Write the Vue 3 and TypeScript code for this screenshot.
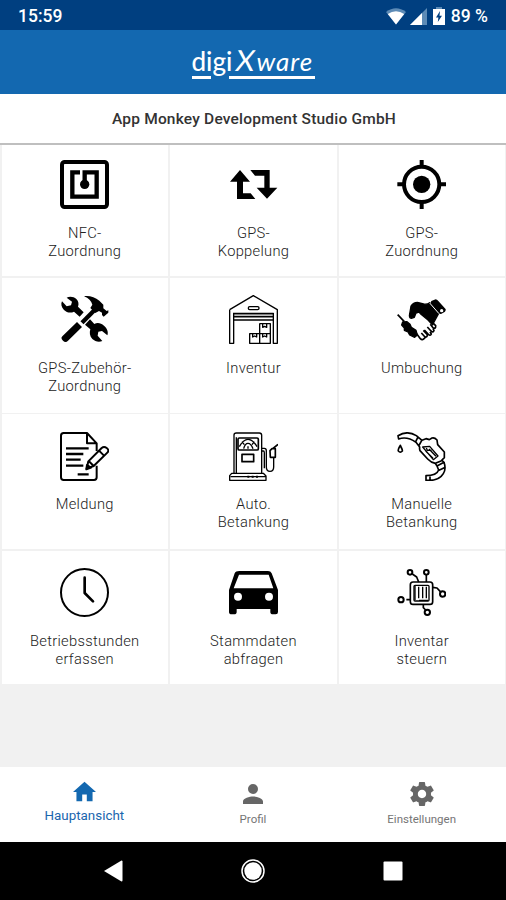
<script setup lang="ts">
interface Tile {
  icon: string
  lines: string[]
}

const tiles: Tile[] = [
  { icon: 'nfc', lines: ['NFC-', 'Zuordnung'] },
  { icon: 'link', lines: ['GPS-', 'Koppelung'] },
  { icon: 'gps', lines: ['GPS-', 'Zuordnung'] },
  { icon: 'tools', lines: ['GPS-Zubehör-', 'Zuordnung'] },
  { icon: 'warehouse', lines: ['Inventur'] },
  { icon: 'handshake', lines: ['Umbuchung'] },
  { icon: 'report', lines: ['Meldung'] },
  { icon: 'pump', lines: ['Auto.', 'Betankung'] },
  { icon: 'nozzle', lines: ['Manuelle', 'Betankung'] },
  { icon: 'clock', lines: ['Betriebsstunden', 'erfassen'] },
  { icon: 'car', lines: ['Stammdaten', 'abfragen'] },
  { icon: 'chip', lines: ['Inventar', 'steuern'] },
]
</script>

<template>
  <div class="screen">
    <div class="status">
      <span class="time">15:59</span>
      <div class="status-right">
        <svg class="wifi" viewBox="0 0 20 17">
          <path d="M0 4Q10-3.500 20 4L10 16.500Z" fill="#5d8bb6" />
          <path d="M1.800 6Q10 .5 18.200 6L10 16.500Z" fill="#fff" />
        </svg>
        <svg class="signal" viewBox="0 0 17 17">
          <path d="M17 0V17H0Z" fill="#5d8bb6" />
          <path d="M12 5V17H0Z" fill="#fff" />
        </svg>
        <svg class="battery" viewBox="0 0 12 18">
          <path d="M3 0h6v2H3z" fill="#5d8bb6" />
          <path d="M0 2h12v16H0z" fill="#fff" />
          <path d="M7 4 3 10.500h2.400L4.800 15 9 8.700H6.500z" fill="#003f80" />
        </svg>
        <span class="percent">89 %</span>
      </div>
    </div>

    <header class="header">
      <div class="logo">
        <div class="wordmark"><span class="digi">digi</span><span class="ex">X</span><span class="ware">ware</span></div>
        <div class="underline"><i class="u1"></i><i class="u2"></i></div>
      </div>
    </header>

    <div class="company">App Monkey Development Studio GmbH</div>

    <main class="grid">
      <div v-for="tile in tiles" :key="tile.icon" class="tile">
        <svg class="icon" viewBox="0 0 147 147" fill="none" stroke="#000" stroke-linejoin="round">
          <g v-if="tile.icon === 'nfc'" stroke-width="12">
            <rect x="6" y="6" width="135" height="135" rx="8" />
            <path d="M60 37H37V110H110V37H74V68" stroke-width="13" stroke-linejoin="miter" />
            <circle cx="74" cy="73" r="14" fill="#000" stroke="none" />
          </g>
          <g v-else-if="tile.icon === 'link'" fill="#000" stroke="none">
            <path d="M33 30 3 65H24V117H79L65 100H42V65H63Z" />
            <path d="M64 30H122V83H145L114 116 83 83H106V47H78Z" />
          </g>
          <g v-else-if="tile.icon === 'gps'">
            <circle cx="74" cy="73" r="53" stroke-width="12" />
            <circle cx="74" cy="73" r="26" fill="#000" stroke="none" />
            <path d="M74 0V20M74 127V147M1 73H21M127 73H147" stroke-width="12" />
          </g>
          <g v-else-if="tile.icon === 'tools'">
            <path d="M20 8C28 3 41 4 49 12C56 19 57 27 54 35L71 52L59 65L42 50C32 55 20 53 12 45C4 37 2 27 6 19L20 34L33 31L36 20Z" fill="#000" stroke="none" />
            <path d="M90 73 103 87C112 82 123 84 132 92C141 99 146 111 142 121L126 108L115 110L113 122L127 138C116 143 105 139 97 132C89 124 88 113 91 103L75 89Z" fill="#000" stroke="none" />
            <path d="M66 83 106 43" stroke-width="13" />
            <path d="M72 4C87 1 105 7 118 17L130 29L130 40L140 48L145 46V53L131 65L126 60L126 53L117 48L106 54L91 39L97 29C94 18 86 9 72 4Z" fill="#000" stroke="none" />
            <path d="M51 81 66 96 24 137Q17 145 9 137L5 132Q3 128 7 124Z" fill="#000" stroke="none" />
          </g>
          <g v-else-if="tile.icon === 'warehouse'" stroke-width="4">
            <path d="M2 44 73 2 145 44V145H133V54M2 44V145H14V54" />
            <path d="M12 56H134M15 65H132M15 75H132" stroke-width="5" />
            <rect x="58" y="35" width="32" height="9" rx="4" />
            <path d="M91 86H124V145H62V116H124M92 86V145M101 87V97L107 94 113 97V87M101 117V126L107 123 113 126V117M71 117V126L77 123 83 126V117" />
          </g>
          <g v-else-if="tile.icon === 'handshake'" stroke-width="4">
            <path d="M38 57 42 33Q49 22 61 22L80 27Q91 29 98 23L125 55 112 79 107 90 93 75 72 58 66 51 57 54 52 67 43 70Q35 68 38 57Z" fill="#000" />
            <path d="M103 18 116 13Q120 13 124 18L145 41Q148 45 144 50L132 57Q127 57 124 53L103 29Q100 24 103 18Z" fill="#000" stroke="none" />
            <path d="M98 24 126 56" stroke="#fff" stroke-width="3" />
            <circle cx="134" cy="47" r="5" fill="#fff" stroke="none" />
            <path d="M2 59 22 80" stroke-width="5" />
            <path d="M14 90 17 81 30 80 39 88 43 97 57 106 61 120 53 127 38 120 33 111 22 106 22 99Z" fill="#000" />
            <path d="M59 116 70 131Q76 137 82 130L87 125M82 105 94 118Q100 124 103 117L99 111M91 96 102 108Q109 114 111 106L108 101M100 88 108 98Q117 103 116 92L106 82M73 114 84 126Q91 127 91 119L79 106" stroke-width="5" />
          </g>
          <g v-else-if="tile.icon === 'report'" stroke-width="6">
            <path d="M110 57V34L81 3H11Q3 3 3 11V136Q3 144 11 144H102Q110 144 110 136V101M81 4V34H110" />
            <path d="M18 49H86M18 66H70M18 83H62M18 101H70M53 127H86" stroke-width="7" />
            <path d="M85 88 125 48Q132 42 140 48Q149 55 142 62L101 102 80 110ZM86 87 101 102M117 56 132 71" stroke-width="6" />
            <path d="M81 99 93 107 79 112Z" fill="#000" />
          </g>
          <g v-else-if="tile.icon === 'pump'" stroke-width="4">
            <path d="M15 124V9Q15 3 22 3H91Q98 3 98 10V124M22 124V16M8 124H103L111 132V145H2V131ZM5 134H109" />
            <rect x="27" y="18" width="61" height="36" rx="4" stroke-width="5" />
            <path d="M31 44Q43 22 57 22T84 44M44 50Q48 34 57 34T72 50M57 43V50M39 29 46 38M76 29 69 38" />
            <rect x="39" y="67" width="35" height="22" stroke-width="5" />
            <path d="M98 49H106Q112 49 112 56V105Q112 118 123 118T134 105V77M98 57H103Q106 57 106 62V109" />
            <path d="M123 56 129 50H139V76H124ZM131 50 147 37" stroke-width="5" />
            <path d="M55 134H61M68 134H74M81 134H87" stroke-width="6" />
          </g>
          <g v-else-if="tile.icon === 'nozzle'" stroke-width="5">
            <path d="M5 21 3 11Q31-6 58 11L75 25 87 20 97 23 105 18Q113 16 120 24L122 38 142 60 142 77 132 87 115 94Q102 92 92 81L69 56Q67 50 68 45L57 31Q30 12 5 21ZM62 17 55 31M74 26 65 42" />
            <path d="M77 45 98 43 123 72 109 83ZM88 48 91 55 104 55M96 51 117 73M86 57 108 79" stroke-width="4" />
            <path d="M115 94 120 102 141 91 134 84M120 102 125 114Q119 131 87 131V145Q125 148 139 125Q148 111 141 91M123 116 145 106M99 131V145" />
            <path d="M10 40C6 47 2 52 4 57Q10 64 16 57C17 51 12 47 10 40Z" />
          </g>
          <g v-else-if="tile.icon === 'clock'" stroke-width="6">
            <circle cx="73.500" cy="73.500" r="70.500" />
            <path d="M74 29V75L99 100" stroke-width="8" stroke-linecap="round" />
          </g>
          <g v-else-if="tile.icon === 'car'" fill="#000" stroke="none">
            <path fill-rule="evenodd" d="M31 9H117Q125 9 128 16L147 66V132Q147 139 140 139H132Q124 139 124 132V123H23V132Q23 139 15 139H8Q0 139 0 132V66L17 16Q20 9 31 9ZM30 20 14 61H133L119 20Z" />
            <circle cx="27" cy="86" r="12" fill="#fff" />
            <circle cx="120" cy="86" r="12" fill="#fff" />
          </g>
          <g v-else-if="tile.icon === 'chip'" stroke-width="5">
            <rect x="40" y="42" width="67" height="67" rx="8" />
            <rect x="51" y="52" width="45" height="47" rx="3" stroke-width="4" />
            <path d="M54 53V96M65 56V91M77 56V91M88 56V91M66 97H93" stroke-width="4" />
            <path d="M46 18 59 27 65 42M88 21V42M107 58 120 60 130 71M28 95H40M79 109V119L86 126" />
            <circle cx="39" cy="13" r="7" stroke-width="6" />
            <circle cx="88" cy="13" r="7" stroke-width="6" />
            <circle cx="137" cy="78" r="8" stroke-width="6" />
            <circle cx="12" cy="95" r="8" stroke-width="6" />
            <circle cx="91" cy="133" r="8" stroke-width="6" />
          </g>
        </svg>
        <div class="label">
          <div v-for="line in tile.lines" :key="line">{{ line }}</div>
        </div>
      </div>
    </main>

    <nav class="tabs">
      <div class="tab active">
        <svg class="tab-icon home" viewBox="2 3 20 17"><path d="M10 20v-6h4v6h5v-8h3L12 3 2 12h3v8z" /></svg>
        <span>Hauptansicht</span>
      </div>
      <div class="tab">
        <svg class="tab-icon person" viewBox="4 4 16 16"><path d="M12 12a4 4 0 1 0 0-8 4 4 0 0 0 0 8zm0 2c-2.670 0-8 1.340-8 4v2h16v-2c0-2.660-5.330-4-8-4z" /></svg>
        <span>Profil</span>
      </div>
      <div class="tab">
        <svg class="tab-icon gear" viewBox="2 2 20 20"><path d="M19.430 12.980c.04-.32.07-.64.07-.98s-.03-.66-.07-.98l2.110-1.650c.19-.15.24-.42.12-.64l-2-3.460c-.12-.22-.39-.3-.61-.22l-2.490 1c-.52-.4-1.080-.73-1.690-.98l-.38-2.650A.488.488 0 0 0 14 2h-4c-.25 0-.46.18-.49.42l-.38 2.650c-.61.25-1.170.59-1.690.98l-2.490-1c-.23-.09-.49 0-.61.22l-2 3.460c-.13.22-.07.49.12.64l2.110 1.650c-.04.32-.07.65-.07.98s.03.66.07.98l-2.110 1.650c-.19.15-.24.42-.12.64l2 3.460c.12.22.39.3.61.22l2.490-1c.52.4 1.080.73 1.690.98l.38 2.650c.03.24.24.42.49.42h4c.25 0 .46-.18.49-.42l.38-2.650c.61-.25 1.170-.59 1.690-.98l2.490 1c.23.09.49 0 .61-.22l2-3.460c.12-.22.07-.49-.12-.64l-2.110-1.650zM12 15.500c-1.930 0-3.500-1.570-3.500-3.500s1.570-3.500 3.500-3.500 3.500 1.570 3.500 3.500-1.570 3.500-3.500 3.500z" /></svg>
        <span>Einstellungen</span>
      </div>
    </nav>

    <div class="system">
      <svg class="sys" viewBox="0 0 24 24"><path d="M3 12 20.500 1.500q1 0 1 1v19q0 1-1 1z" fill="#fff" /></svg>
      <svg class="sys" viewBox="0 0 24 24">
        <circle cx="12" cy="12" r="11" fill="none" stroke="#fff" stroke-width="1.500" />
        <circle cx="12" cy="12" r="8.700" fill="#fff" />
      </svg>
      <svg class="sys" viewBox="0 0 24 24"><rect x="2.500" y="2.500" width="19" height="19" rx="1" fill="#fff" /></svg>
    </div>
  </div>
</template>

<style>
body {
  background: #f1f1f1;
}
</style>

<style scoped>
.screen {
  width: 506px;
  height: 900px;
  display: flex;
  flex-direction: column;
  background: #f1f1f1;
  font-family: Roboto, "Liberation Sans", sans-serif;
  overflow: hidden;
}
svg {
  display: block;
}
.status {
  height: 30px;
  flex: none;
  box-sizing: border-box;
  padding: 2px 18px 0 18px;
  background: #003f80;
  color: #fff;
  display: flex;
  align-items: center;
  justify-content: space-between;
  font-size: 17.500px;
  font-weight: 500;
}
.status-right {
  display: flex;
  align-items: center;
}
.wifi {
  width: 20px;
  height: 17px;
}
.signal {
  width: 17px;
  height: 17px;
  margin-left: 4px;
}
.battery {
  width: 12px;
  height: 18px;
  margin: 0 6px 0 6px;
}
.header {
  height: 64px;
  flex: none;
  background: #1368b0;
  display: flex;
  justify-content: center;
}
.logo {
  width: 123px;
  padding-top: 14px;
  color: #fff;
}
.wordmark {
  display: flex;
  align-items: baseline;
  height: 32px;
  line-height: 32px;
  white-space: nowrap;
}
.digi {
  font: 500 26px/32px Lato, sans-serif;
  width: 44px;
}
.ex {
  font: 400 29px/32px Lato, sans-serif;
  width: 21px;
  transform: skewX(-8deg);
}
.ware {
  font: italic 400 26px/32px Lato, sans-serif;
  letter-spacing: 1px;
}
.underline {
  display: flex;
  justify-content: space-between;
}
.underline i {
  height: 3px;
  background: #fff;
}
.u1 {
  width: 19px;
}
.u2 {
  width: 86px;
}
.company {
  height: 49px;
  flex: none;
  background: #fff;
  border-bottom: 2px solid #bfbfbf;
  display: flex;
  align-items: center;
  justify-content: center;
  padding-left: 2px;
  box-sizing: content-box;
  font-size: 15.500px;
  font-weight: 500;
  letter-spacing: 0.2px;
  color: #333;
}
.grid {
  display: grid;
  grid-template-columns: 166.500px 167px 165.500px;
  grid-template-rows: 131px 135px 135px 133px;
  column-gap: 2px;
  row-gap: 1.500px;
  padding-left: 1.500px;
  flex: none;
}
.tile {
  background: #fff;
  display: flex;
  flex-direction: column;
  align-items: center;
  padding-top: 17.500px;
  box-sizing: border-box;
}
.tile:nth-child(-n + 3) {
  padding-top: 15px;
}
.icon {
  width: 49px;
  height: 49px;
  flex: none;
}
.label {
  margin-top: 14.500px;
  font-size: 14.700px;
  line-height: 18px;
  letter-spacing: 0.3px;
  text-align: center;
  font-weight: 300;
  color: #222;
  white-space: nowrap;
}
.tabs {
  margin-top: auto;
  height: 75px;
  flex: none;
  background: #fff;
  display: grid;
  grid-template-columns: repeat(3, 1fr);
}
.tab {
  display: flex;
  flex-direction: column;
  align-items: center;
  color: #757575;
  fill: #666;
  font-size: 11.500px;
  line-height: 14px;
  padding-top: 15px;
}
.active {
  color: #1a65ae;
  fill: #1368b0;
  font-size: 13.400px;
  line-height: 16px;
  padding-top: 14px;
}
.tab-icon {
  margin-bottom: 6px;
}
.home {
  width: 23px;
  height: 21px;
}
.person {
  width: 20px;
  height: 20px;
  margin: 2px 0 8px;
}
.gear {
  width: 24px;
  height: 24px;
}
.system {
  height: 58px;
  flex: none;
  background: #000;
  display: flex;
  justify-content: center;
  align-items: center;
  gap: 116px;
}
.sys {
  width: 24px;
  height: 24px;
}
</style>
